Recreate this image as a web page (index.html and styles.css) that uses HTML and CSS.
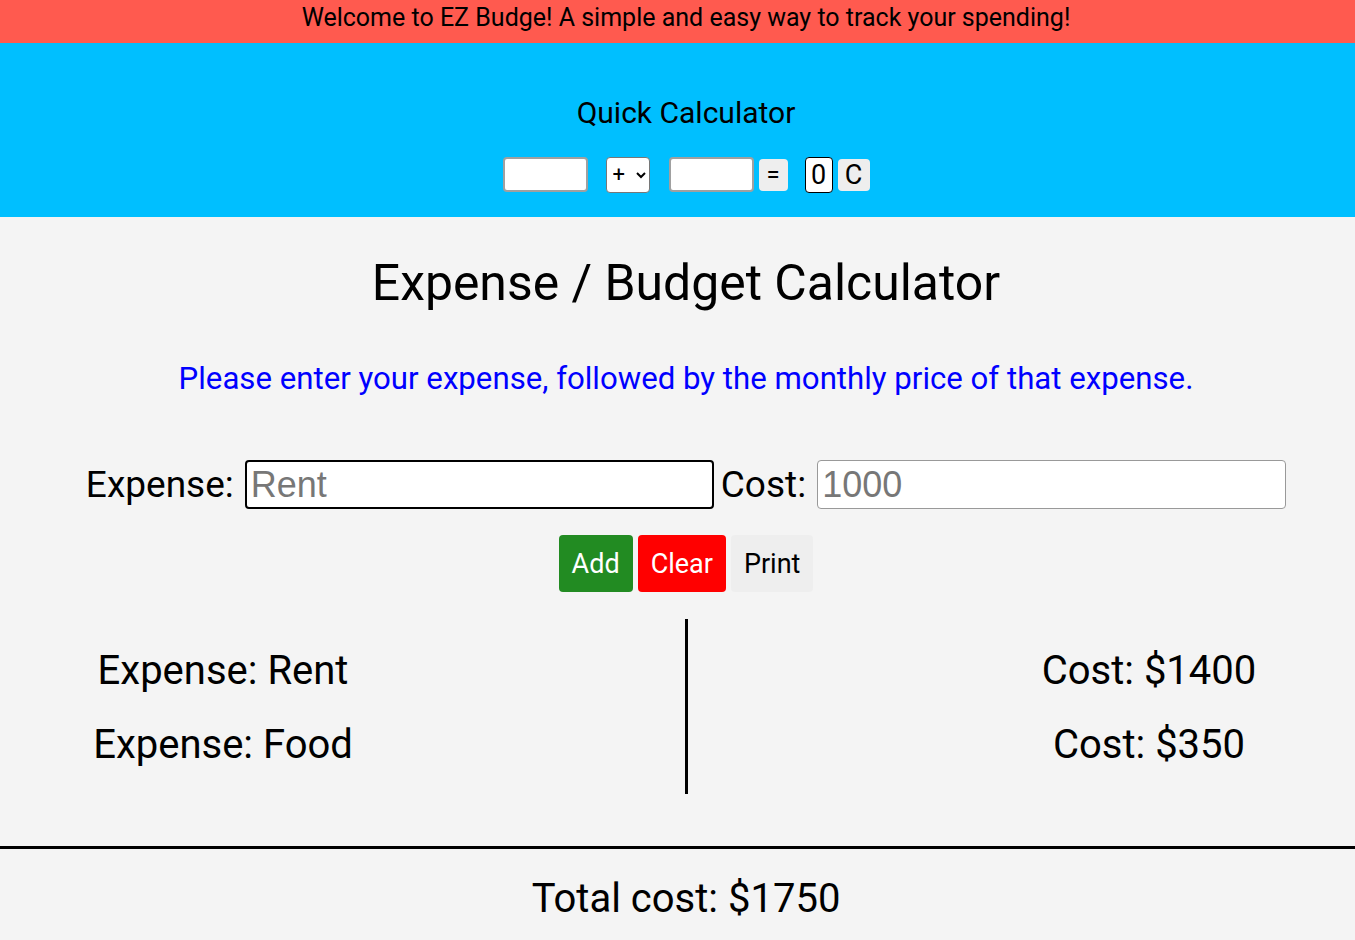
FILE: index.html
```html
<!DOCTYPE html>
<html>
<head>
<meta charset="utf-8">
<link rel="stylesheet" href="styles.css">
</head>
<body>
<div class="banner">Welcome to EZ Budge! A simple and easy way to track your spending!</div>
<section class="quick">
  <h2 class="quick-title">Quick Calculator</h2>
  <div class="calc-row">
    <input class="calc-input" type="text">
    <select class="calc-select"><option>+</option></select>
    <input class="calc-input calc-input2" type="text">
    <button class="calc-eq">=</button>
    <span class="calc-result">0</span>
    <button class="calc-clear">C</button>
  </div>
</section>
<main class="main">
  <h1 class="title">Expense / Budget Calculator</h1>
  <p class="instructions">Please enter your expense, followed by the monthly price of that expense.</p>
  <div class="entry-row">
    <label class="entry-label">Expense:</label>
    <input class="entry-input entry-focus" type="text" placeholder="Rent">
    <label class="entry-label">Cost:</label>
    <input class="entry-input" type="text" placeholder="1000">
  </div>
  <div class="btn-row">
    <button class="btn btn-add">Add</button>
    <button class="btn btn-clear">Clear</button>
    <button class="btn btn-print">Print</button>
  </div>
  <div class="list">
    <div class="list-left">
      <div class="col">
        <p class="item">Expense: Rent</p>
        <p class="item">Expense: Food</p>
      </div>
    </div>
    <div class="divider"></div>
    <div class="list-right">
      <div class="col">
        <p class="item">Cost: $1400</p>
        <p class="item">Cost: $350</p>
      </div>
    </div>
  </div>
  <hr class="rule">
  <p class="total">Total cost: $1750</p>
</main>
</body>
</html>
```
FILE: styles.css
```css
* { box-sizing: border-box; }
html { margin: 0; padding: 0; overflow: hidden; background: #f4f4f4; }
body {
  margin: 0;
  padding: 0;
  font-family: Roboto, "Noto Sans", sans-serif;
  background: #f4f4f4;
  color: #000;
  width: 1372px;
  height: 940px;
}
.banner {
  background: #ff5a4f;
  height: 43px;
  text-align: center;
  font-size: 25px;
  line-height: 36px;
}
.quick {
  background: #00bfff;
  height: 174px;
  padding-top: 50px;
  text-align: center;
}
.quick-title {
  margin: 0;
  font-weight: 400;
  font-size: 30px;
  line-height: 40px;
}
.calc-row {
  display: flex;
  justify-content: center;
  align-items: center;
  margin-top: 23px;
  height: 37px;
}
.calc-input {
  width: 85px;
  height: 35px;
  border: 2px solid #a0a0a0;
  border-radius: 4px;
  background: #fff;
}
.calc-select {
  width: 44px;
  height: 36px;
  margin: 0 19px 0 18px;
  border: 1px solid #777;
  border-radius: 4px;
  background: #fff;
  color: #000;
  font-size: 22px;
  font-family: Roboto, sans-serif;
  padding: 0 2px;
}
.calc-input2 { margin-right: 5px; }
.calc-eq, .calc-clear {
  height: 32px;
  border: none;
  border-radius: 4px;
  background: #eee;
  color: #000;
  font-family: Roboto, sans-serif;
  padding: 0;
}
.calc-eq { width: 29px; font-size: 24px; }
.calc-clear { width: 32px; margin-left: 5px; font-size: 27px; }
.calc-result {
  margin-left: 17px;
  width: 28px;
  height: 36px;
  border: 1px solid #000;
  border-radius: 4px;
  background: #fff;
  font-size: 27px;
  line-height: 34px;
}
.main { text-align: center; }
.title {
  margin: 34px 0 0;
  font-size: 49.9px;
  font-weight: 400;
  line-height: 64px;
}
.instructions {
  margin: 44px 0 0;
  color: #0000ff;
  font-size: 31.2px;
  line-height: 40px;
}
.entry-row {
  display: flex;
  justify-content: center;
  align-items: center;
  margin-top: 61px;
  gap: 7px;
}
.entry-label {
  font-size: 37px;
  margin-right: 4px;
}
.entry-input {
  width: 469px;
  height: 49px;
  border: 1px solid #999;
  border-radius: 4px;
  background: #fff;
  font-family: "Liberation Sans", Arial, sans-serif;
  font-size: 36px;
  padding: 0 4px;
}
.entry-input::placeholder { color: #777; }
.entry-focus { border: 2px solid #000; }
.btn-row {
  display: flex;
  justify-content: center;
  gap: 5px;
  margin-top: 26px;
}
.btn {
  height: 57px;
  border: none;
  border-radius: 4px;
  font-family: Roboto, sans-serif;
  font-size: 27px;
  padding: 0 13px;
}
.btn-add { background: #228b22; color: #fff; }
.btn-clear { background: #ff0000; color: #fff; }
.btn-print { background: #eeeeee; color: #000; }
.list {
  display: flex;
  margin-top: 27px;
  height: 175px;
}
.list-left, .list-right { flex: 1; display: flex; }
.list-right { justify-content: flex-end; }
.divider { width: 3px; background: #000; }
.col { width: 446px; }
.item {
  margin: 30px 0 0;
  font-size: 40px;
  line-height: 44px;
}
.rule {
  margin: 52px 0 0;
  border: none;
  border-top: 3px solid #000;
  height: 0;
}
.total {
  margin: 28px 0 0;
  font-size: 40px;
  line-height: 44px;
}
```
